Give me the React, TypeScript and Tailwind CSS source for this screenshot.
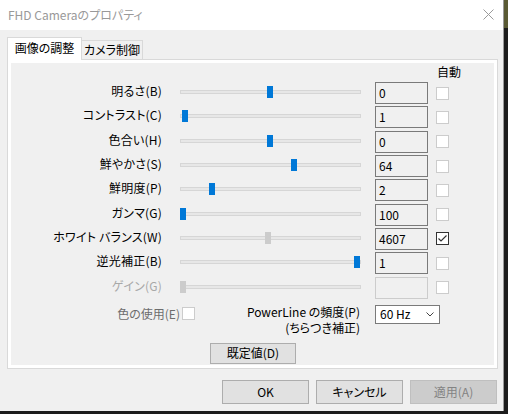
import React from 'react';

type Row = {
  label: string;
  value: string;
  pos: number;
  grayThumb?: boolean;
  checked?: boolean;
  disabled?: boolean;
};

const ROWS: Row[] = [
  { label: '明るさ(B)', value: '0', pos: 87 },
  { label: 'コントラスト(C)', value: '1', pos: 2 },
  { label: '色合い(H)', value: '0', pos: 87 },
  { label: '鮮やかさ(S)', value: '64', pos: 111 },
  { label: '鮮明度(P)', value: '2', pos: 29 },
  { label: 'ガンマ(G)', value: '100', pos: 0 },
  { label: 'ホワイト バランス(W)', value: '4607', pos: 85, grayThumb: true, checked: true },
  { label: '逆光補正(B)', value: '1', pos: 174 },
  { label: 'ゲイン(G)', value: '', pos: 0, grayThumb: true, disabled: true },
];

function Checkbox({ checked }: { checked?: boolean }) {
  if (checked) {
    return (
      <div className="w-[13px] h-[13px] border border-[#333333] bg-white flex items-center justify-center">
        <svg width="11" height="11" viewBox="0 0 11 11">
          <polyline points="1.5,5.5 4,8 9.5,2.5" fill="none" stroke="#333333" strokeWidth="1.2" />
        </svg>
      </div>
    );
  }
  return <div className="w-[13px] h-[13px] border border-[#cccccc] bg-white" />;
}

function Slider({ pos, gray }: { pos: number; gray?: boolean }) {
  return (
    <div className="relative w-[181px] h-[12px] flex items-center mb-[2px]">
      <div className="w-full h-[4px] border border-[#d6d6d6] bg-[#e7e7e7]" />
      <div
        className={`absolute top-0 w-[6px] h-[12px] ${gray ? 'bg-[#cccccc]' : 'bg-[#0078d7]'}`}
        style={{ left: pos }}
      />
    </div>
  );
}

function Button({ label, disabled }: { label: string; disabled?: boolean }) {
  return (
    <div
      className={`w-[87px] h-[24px] flex items-center justify-center border ${
        disabled ? 'bg-[#cccccc] border-[#bfbfbf] text-[#838383]' : 'bg-[#e1e1e1] border-[#adadad] text-black'
      }`}
    >
      {label}
    </div>
  );
}

export default function App() {
  return (
    <div className="w-[508px] h-[414px] bg-[#1c1c1c] flex overflow-hidden font-['Noto_Sans_CJK_JP',sans-serif] text-[12px] leading-none text-black [font-feature-settings:'palt']">
      <div className="flex flex-col">
        <div className="w-[504px] h-[411px] bg-[#f0f0f0] flex flex-col border-r border-[#9a9a9a]">
          {/* title bar */}
          <div className="h-[30px] bg-white flex items-center justify-between pl-[8px] pr-[9px]">
            <span className="text-[#999999]">FHD Cameraのプロパティ</span>
            <svg width="11" height="11" viewBox="0 0 11 11" className="mb-[2px]">
              <line x1="0.5" y1="0.5" x2="10.5" y2="10.5" stroke="#9a9a9a" strokeWidth="1" />
              <line x1="10.5" y1="0.5" x2="0.5" y2="10.5" stroke="#9a9a9a" strokeWidth="1" />
            </svg>
          </div>

          {/* tabs */}
          <div className="mt-[7px] ml-[7px] h-[23px] flex items-end relative z-10">
            <div className="w-[75px] h-[23px] bg-white border-x border-t border-[#d9d9d9] flex items-center justify-center pb-[2px] whitespace-nowrap">
              画像の調整
            </div>
            <div className="h-[20px] px-[2px] bg-[#f0f0f0] border-t border-r border-b border-[#d9d9d9] flex items-center justify-center whitespace-nowrap">
              カメラ制御
            </div>
          </div>

          {/* panel */}
          <div className="-mt-px ml-[7px] w-[491px] h-[310px] border border-[#d9d9d9] bg-white p-[3px]">
            <div className="w-full h-full bg-[#f0f0f0] flex flex-col">
              <div className="h-[18px] pl-[426px] flex items-center">自動</div>

              {ROWS.map((r) => (
                <div key={r.label} className="h-[24.3px] flex items-center">
                  <div
                    className={`w-[151px] text-right whitespace-nowrap mb-[4px] tracking-[0.2px] ${
                      r.disabled ? 'text-[#a8a8a8]' : 'text-black'
                    }`}
                  >
                    {r.label}
                  </div>
                  <div className="ml-[18px]">
                    <Slider pos={r.pos} gray={r.grayThumb} />
                  </div>
                  <div
                    className={`ml-[14px] w-[53px] h-[22px] border flex items-center pl-[3px] ${
                      r.disabled ? 'border-[#cccccc]' : 'border-[#7a7a7a]'
                    }`}
                  >
                    {r.value}
                  </div>
                  <div className="ml-[8px]">
                    <Checkbox checked={r.checked} />
                  </div>
                </div>
              ))}

              {/* color use / power line */}
              <div className="mt-[5px] h-[38px] flex items-start">
                <div className="w-[169px] h-[19px] flex items-center justify-end text-[#6d6d6d]">色の使用(E)</div>
                <div className="ml-[2px] mt-[2px]">
                  <Checkbox />
                </div>
                <div className="w-[165px] text-right leading-[16px] -mt-[1px]">
                  <div>PowerLine の頻度(P)</div>
                  <div>(ちらつき補正)</div>
                </div>
                <div className="ml-[15px] w-[65px] h-[19px] border border-[#7a7a7a] bg-white flex items-center justify-between pl-[4px] pr-[5px]">
                  <span>60 Hz</span>
                  <svg width="8" height="5" viewBox="0 0 8 5">
                    <polyline points="0.5,0.5 4,4 7.5,0.5" fill="none" stroke="#444444" strokeWidth="1" />
                  </svg>
                </div>
              </div>

              <div className="pl-[199px]">
                <div className="w-[86px] h-[21px] bg-[#e1e1e1] border border-[#adadad] flex items-center justify-center">
                  既定値(D)
                </div>
              </div>
            </div>
          </div>

          {/* dialog buttons */}
          <div className="mt-[11px] pr-[6px] flex justify-end gap-[7px]">
            <Button label="OK" />
            <Button label="キャンセル" />
            <Button label="適用(A)" disabled />
          </div>
        </div>
        <div className="flex-1 bg-[#1c1c1c]" />
      </div>
      <div className="flex-1 flex flex-col">
        <div className="h-[28px] bg-[#5a5a34]" />
        <div className="flex-1 bg-[#1c1c1c]" />
      </div>
    </div>
  );
}
